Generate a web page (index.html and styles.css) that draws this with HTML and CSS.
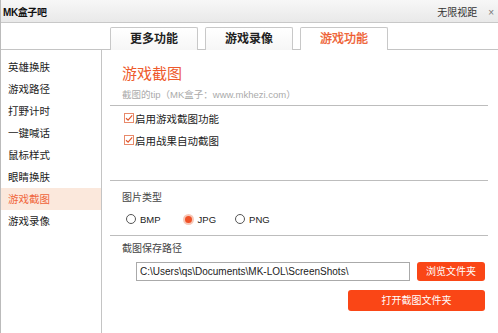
FILE: index.html
```html
<!DOCTYPE html>
<html>
<head>
    <meta charset="UTF-8">
    <title>MK盒子吧</title>
    <link rel="stylesheet" href="styles.css">
</head>
<body>
    <div class="window">
        <div class="titlebar">
            <span class="app-name">MK盒子吧</span>
            <span class="title-right">无限视距<span class="close">×</span></span>
        </div>
        <div class="tabs">
            <div class="tab">更多功能</div>
            <div class="tab">游戏录像</div>
            <div class="tab active">游戏功能</div>
        </div>
        <div class="body">
            <ul class="sidebar">
                <li>英雄换肤</li>
                <li>游戏路径</li>
                <li>打野计时</li>
                <li>一键喊话</li>
                <li>鼠标样式</li>
                <li>眼睛换肤</li>
                <li class="current">游戏截图</li>
                <li>游戏录像</li>
            </ul>
            <div class="main">
                <div class="section head">
                    <div class="page-title">游戏截图</div>
                    <div class="tip">截图的tip（MK盒子：www.mkhezi.com）</div>
                </div>
                <div class="section checks">
                    <label class="check">
                        <svg width="10" height="10" viewBox="0 0 10 10"><rect x="0.5" y="0.5" width="9" height="9" fill="#fff" stroke="#e8896a"/><path d="M2 5.2 L4.1 7.2 L8.2 2.4" fill="none" stroke="#e2572c" stroke-width="1.2"/></svg>
                        启用游戏截图功能
                    </label>
                    <label class="check">
                        <svg width="10" height="10" viewBox="0 0 10 10"><rect x="0.5" y="0.5" width="9" height="9" fill="#fff" stroke="#e8896a"/><path d="M2 5.2 L4.1 7.2 L8.2 2.4" fill="none" stroke="#e2572c" stroke-width="1.2"/></svg>
                        启用战果自动截图
                    </label>
                </div>
                <div class="section types">
                    <div class="label">图片类型</div>
                    <div class="radios">
                        <span class="radio"><i class="dot"></i>BMP</span>
                        <span class="radio on"><i class="dot"></i>JPG</span>
                        <span class="radio"><i class="dot"></i>PNG</span>
                    </div>
                </div>
                <div class="section path">
                    <div class="label">截图保存路径</div>
                    <div class="path-row">
                        <div class="path-input">C:\Users\qs\Documents\MK-LOL\ScreenShots\</div>
                        <div class="btn browse">浏览文件夹</div>
                    </div>
                    <div class="btn open">打开截图文件夹</div>
                </div>
            </div>
        </div>
    </div>
</body>
</html>
```

FILE: styles.css
```css
body {
    margin: 0;
    font-family: "Liberation Sans", "Noto Sans CJK SC", sans-serif;
    color: #333;
    background: #fff;
}

.window {
    width: 498px;
    height: 333px;
    border-left: 1px solid #bbb;
    box-sizing: border-box;
    overflow: hidden;
    background: #fff;
}

.titlebar {
    height: 22px;
    border-bottom: 1px solid #c8c8c8;
    background: linear-gradient(#f7f7f7, #e9e9e9);
    display: flex;
    align-items: center;
    justify-content: space-between;
    padding: 0 4px 0 2px;
}

.app-name {
    font-size: 10px;
    font-weight: bold;
    color: #111;
    letter-spacing: -0.4px;
}

.title-right {
    font-size: 10px;
    color: #333;
}

.close {
    margin-left: 11px;
    color: #777;
    font-size: 10px;
}

.tabs {
    height: 26px;
    border-bottom: 1px solid #c4c4c4;
    display: flex;
    align-items: flex-end;
    gap: 7px;
    padding-left: 109px;
}

.tab {
    width: 86px;
    height: 21px;
    border: 1px solid #c8c8c8;
    border-bottom: none;
    border-radius: 2px 2px 0 0;
    background: linear-gradient(#fff, #f6f6f6);
    text-align: center;
    font-size: 12px;
    font-weight: bold;
    line-height: 22px;
    color: #222;
    margin-bottom: -1px;
    padding-bottom: 1px;
}

.tab.active {
    color: #ee5a2c;
    background: #fff;
    font-weight: normal;
    -webkit-text-stroke: 0.3px #ee5a2c;
}

.body {
    display: flex;
    height: 283px;
}

.sidebar {
    list-style: none;
    margin: 0;
    padding: 6px 0 0;
    width: 100px;
    border-right: 1px solid #c4c4c4;
}

.sidebar li {
    height: 22px;
    line-height: 22px;
    padding-left: 7px;
    font-size: 10.5px;
    color: #222;
}

.sidebar li.current {
    background: #fbe8dc;
    color: #f0643a;
}

.main {
    flex: 1;
    padding: 0 10px 0 8px;
}

.section {
    border-bottom: 1px solid #bdbdbd;
    padding-left: 12px;
}

.section.head {
    padding-top: 14px;
    padding-bottom: 2px;
}

.page-title {
    font-size: 15px;
    line-height: 20px;
    color: #ee5a2c;
}

.tip {
    margin-top: 3px;
    font-size: 9.5px;
    line-height: 16px;
    color: #aaa;
}

.section.checks {
    padding-top: 1px;
    padding-bottom: 29px;
    padding-left: 14px;
}

.check {
    display: flex;
    align-items: center;
    height: 22px;
    font-size: 10.5px;
    color: #222;
}

.check svg {
    margin-right: 1px;
}

.section.types {
    padding-top: 8px;
    padding-bottom: 6px;
}

.label {
    font-size: 10px;
    line-height: 18px;
    color: #444;
}

.radios {
    display: flex;
    margin-top: 2px;
    height: 20px;
    align-items: center;
    padding-left: 4px;
}

.radio {
    display: flex;
    align-items: center;
    font-size: 9.5px;
    color: #222;
    margin-right: 22px;
}

.dot {
    width: 10px;
    height: 10px;
    border: 1px solid #555;
    border-radius: 50%;
    margin-right: 4px;
    box-sizing: border-box;
    display: inline-block;
}

.radio.on .dot {
    border: 2px solid #f7c8b8;
    background: #f05228;
    width: 11px;
    height: 11px;
}

.radio.on {
    margin-right: 19px;
}

.section.path {
    border-bottom: none;
    padding-top: 4px;
    padding-right: 3px;
}

.path-row {
    display: flex;
    gap: 7px;
    margin-top: 4px;
    padding-left: 14px;
}

.path-input {
    width: 274px;
    height: 19px;
    box-sizing: border-box;
    border: 1px solid #aaa;
    font-size: 10px;
    line-height: 17px;
    padding-left: 3px;
    color: #222;
}

.btn {
    background: #fa4616;
    color: #fff;
    border-radius: 3px;
    font-size: 10px;
    text-align: center;
}

.btn.browse {
    width: 68px;
    height: 19px;
    line-height: 19px;
}

.btn.open {
    width: 137px;
    height: 21px;
    line-height: 21px;
    margin: 9px 0 0 auto;
}
```
